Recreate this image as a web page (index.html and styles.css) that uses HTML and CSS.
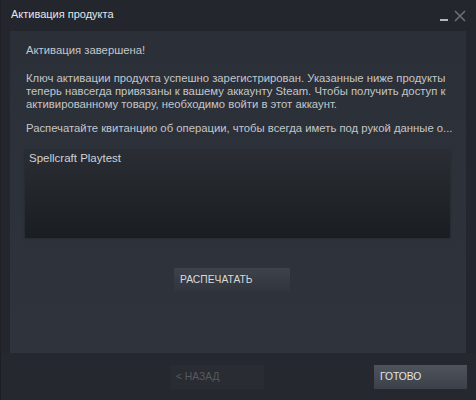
FILE: index.html
```html
<!DOCTYPE html>
<html lang="ru">
<head>
    <meta charset="UTF-8">
    <meta name="viewport" content="width=device-width, initial-scale=1.0">
    <title>Активация продукта</title>
    <link rel="stylesheet" href="styles.css">
</head>
<body>
  <div class="window">
    <div class="titlebar">
      <span class="title">Активация продукта</span>
      <div class="controls">
        <span class="min"></span>
        <svg class="close" width="12" height="12" viewBox="0 0 12 12">
          <path d="M1 1 L11 11 M11 1 L1 11" stroke="#6b6f76" stroke-width="1.6"/>
        </svg>
      </div>
    </div>
    <div class="content">
      <p class="head">Активация завершена!</p>
      <p>Ключ активации продукта успешно зарегистрирован. Указанные ниже продукты теперь навсегда привязаны к вашему аккаунту Steam. Чтобы получить доступ к активированному товару, необходимо войти в этот аккаунт.</p>
      <p class="print_note">Распечатайте квитанцию об операции, чтобы всегда иметь под рукой данные о...</p>
      <div class="products">
        <div class="product">Spellcraft Playtest</div>
      </div>
      <div class="print_row">
        <a href="" class="btn print">РАСПЕЧАТАТЬ</a>
      </div>
    </div>
    <div class="footer">
      <a href="" class="btn back">&lt; НАЗАД</a>
      <a href="" class="btn done">ГОТОВО</a>
    </div>
  </div>
</body>
</html>
```

FILE: styles.css
```css
*{
    margin: 0;
    padding: 0;
    box-sizing: border-box;
}
body{
    width: 476px;
    height: 400px;
    background-color: #22252c;
    font-family: "Liberation Sans", Arial, sans-serif;
    font-size: 12px;
    overflow: hidden;
}
.window{
    height: 400px;
    display: flex;
    flex-direction: column;
    background-color: #23262d;
    border-left: 1px solid #1c1f25;
}
.titlebar{
    height: 31px;
    display: flex;
    justify-content: space-between;
    padding: 8px 10px 0 10px;
    background-color: #23262d;
}
.title{
    color: #e4e7ea;
    font-size: 11px;
}
.controls{
    display: flex;
    align-items: flex-start;
    gap: 6px;
    padding-top: 2px;
}
.min{
    width: 8px;
    height: 2px;
    margin-top: 9px;
    background-color: #b4b8bd;
}
.close{
    display: block;
}
.content{
    height: 322px;
    margin: 0 10px 0 9px;
    padding: 13px 16px 0 16px;
    background-image: linear-gradient(to bottom, #2b2f37, #2f343c);
    color: #c3c6ca;
    font-size: 11.3px;
    line-height: 13px;
}
.content p{
    margin-bottom: 11px;
}
.content .head{
    margin-bottom: 15px;
}
.content .print_note{
    margin-bottom: 16px;
    white-space: nowrap;
}
.products{
    height: 87px;
    margin: 0 0 0 -1px;
    padding: 1px 4px;
    background-image: linear-gradient(to bottom, #2a2d33, #1a1d21);
    box-shadow: 0 0 2px #1e2126;
}
.product{
    color: #cfd2d5;
    font-size: 11.5px;
    line-height: 13px;
}
.print_row{
    display: flex;
    justify-content: center;
    padding: 30px 0 0 0;
}
.btn{
    display: block;
    text-decoration: none;
    font-size: 10.3px;
    padding: 0 6px;
    line-height: 24px;
    height: 24px;
}
.print{
    width: 116px;
    margin-right: 12px;
    color: #d7dadd;
    background-image: linear-gradient(to bottom, #3e424b, #30343c);
}
.footer{
    flex: 1;
    display: flex;
    justify-content: space-between;
    padding: 12px 9px 0 170px;
    background-color: #25282e;
}
.back{
    width: 93px;
    color: #575a60;
    background-color: #292c32;
    padding-left: 5px;
}
.done{
    width: 93px;
    color: #e2e5e8;
    background-image: linear-gradient(to bottom, #4f535c, #3c4049);
}
```
